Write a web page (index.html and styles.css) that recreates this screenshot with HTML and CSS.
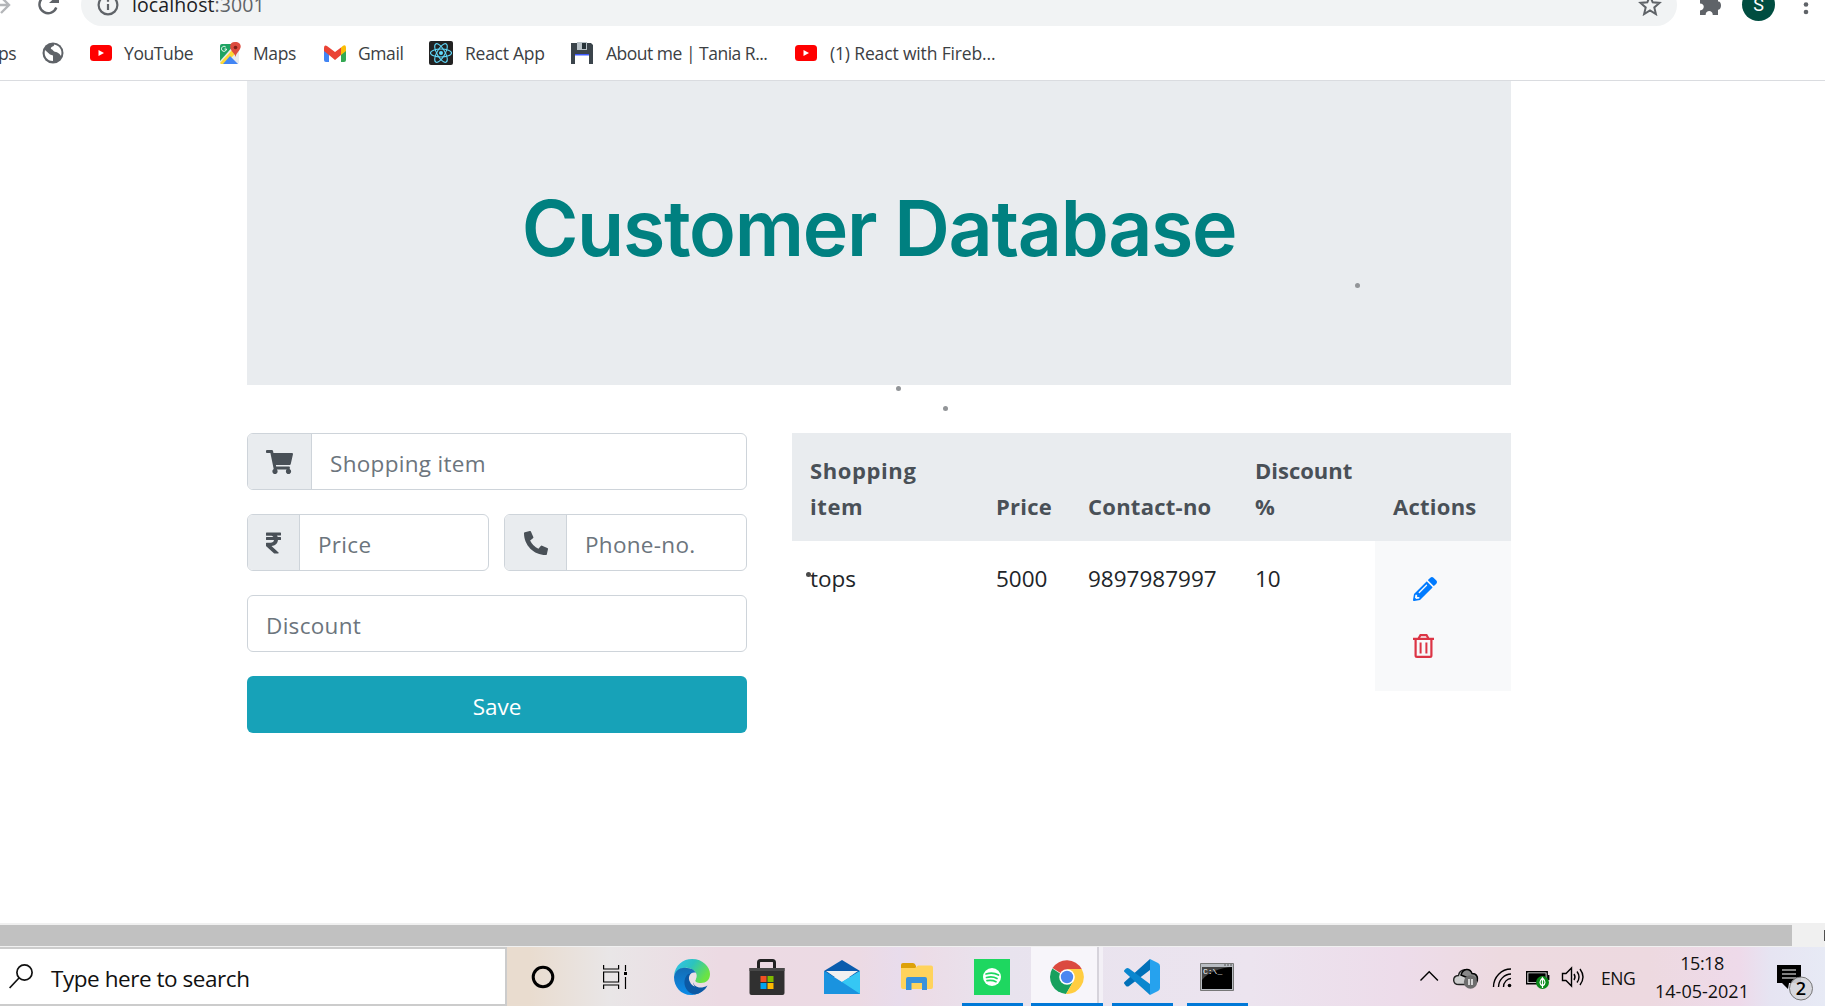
FILE: index.html
```html
<!DOCTYPE html>
<html lang="en">
<head>
<meta charset="utf-8">
<title>Customer Database</title>
<link rel="stylesheet" href="styles.css">
</head>
<body>
<header class="browser">
  <div class="toolbar">
    <svg class="nav" width="81" height="26" viewBox="0 0 81 26" fill="none" stroke-width="2.4">
      <path d="M-4 5H8M1-3l8 8-8 8" stroke="#b4b6b9"/>
      <path d="M56.3 7.5A8.7 8.7 0 1 1 54-2" stroke="#5f6368"/>
      <path d="M49 3h10v-9z" fill="#5f6368"/>
    </svg>
    <div class="omnibox">
      <svg width="22" height="22" viewBox="0 0 22 22" fill="none" stroke="#5f6368" stroke-width="2.2"><circle cx="11" cy="11" r="9.4"/><path d="M11 10v6M11 5.5v2.3"/></svg>
      <span class="url">localhost<span>:3001</span></span>
      <svg class="star" width="24" height="22" viewBox="0 0 24 22" fill="none" stroke="#5f6368" stroke-width="2"><path d="M12 2l2.700 6.300 6.800.6-5.200 4.500 1.600 6.700-5.900-3.600-5.900 3.600 1.600-6.700-5.200-4.500 6.800-.6z"/></svg>
    </div>
    <svg width="148" height="26" viewBox="1677 0 148 26">
      <path d="M1700-4h18v5.500c4-.8 4 9 0 8.200V15h-5.300c.5-5.500-7.500-5.500-7 0H1700V10.500c5-.5 5-7 0-7z" fill="#5f6368"/>
      <circle cx="1758.500" cy="4.500" r="16.500" fill="#004d40"/>
      <text x="1758.500" y="10.500" class="avatar">S</text>
      <g fill="#5f6368"><circle cx="1806" cy="-3" r="2.300"/><circle cx="1806" cy="4.500" r="2.300"/><circle cx="1806" cy="12" r="2.300"/></g>
    </svg>
  </div>
  <nav class="bookmarks">
    <a class="apps">ps</a>
    <a><svg width="22" height="22" viewBox="0 0 22 22"><circle cx="11" cy="11" r="10.500" fill="#5f6368"/><path d="M3 8l5 4.500 3 1v5.500C5 19 1.500 14 3 8zM12 2.500c1 2-4 2-3 4.500 2 0 2 3 5 3 1 0 3 1 5 4C21 8 17 3 12 2.500z" fill="#fff"/></svg></a>
    <a><svg width="22" height="16" viewBox="0 0 22 16"><rect width="22" height="16" rx="3.500" fill="#f00"/><path d="M8.500 5v6l5.500-3z" fill="#fff"/></svg><span>YouTube</span></a>
    <a><svg class="maps" width="22" height="23" viewBox="0 0 22 23"><rect x="1" y="2" width="19" height="20" rx="2" fill="#e8eaed"/><path d="M1 4q0-2 2-2h13L1 19z" fill="#1ea362"/><path d="M1 21L14 7l3 4L6 22H2z" fill="#fdd835"/><path d="M4 22l7-8 8 8z" fill="#4285f4"/><path d="M16 0c7 0 7 6 3 10-1.500 1.500-2 3-2.500 5-.5-2-1.500-3.500-3-5C10 6 10 0 16 0z" fill="#dd4b3e"/><circle cx="16.500" cy="5.500" r="1.800" fill="#7d2019"/><path d="M7.500 7h-2M7.500 7a2.500 2.500 0 1 1-.8-2" stroke="#fff" fill="none"/></svg><span>Maps</span></a>
    <a><svg width="22" height="17" viewBox="0 0 22 17"><path d="M0 3v12q0 2 2 2h3V7z" fill="#4285f4"/><path d="M22 3v12q0 2-2 2h-3V7z" fill="#34a853"/><path d="M17 2.500q5-5 5 1V6l-5 4z" fill="#fbbc04"/><path d="M0 3.500Q0-2 5 2.500l6 4.500 6-4.500V10l-6 5-6-5-5-4z" fill="#ea4335"/></svg><span>Gmail</span></a>
    <a><svg width="24" height="24" viewBox="0 0 24 24"><rect width="24" height="24" rx="2" fill="#222"/><g fill="none" stroke="#61dafb" stroke-width="1.100"><ellipse cx="12" cy="12" rx="10.500" ry="4"/><ellipse cx="12" cy="12" rx="10.500" ry="4" transform="rotate(60 12 12)"/><ellipse cx="12" cy="12" rx="10.500" ry="4" transform="rotate(120 12 12)"/></g><circle cx="12" cy="12" r="2" fill="#61dafb"/></svg><span class="react">React App</span></a>
    <a><svg width="22" height="23" viewBox="0 0 22 23"><path d="M0 1h20l2 2v19H0z" fill="#3b444b"/><path d="M6 0h10v8H6z" fill="#b9c2c8"/><path d="M11 1h4v6h-4z" fill="#263238"/><path d="M4 12h14v10H4z" fill="#fff"/><path d="M4 12h14v1.500H4z" fill="#3d5afe"/></svg><span class="about">About me | Tania R...</span></a>
    <a><svg width="22" height="16" viewBox="0 0 22 16"><rect width="22" height="16" rx="3.500" fill="#f00"/><path d="M8.500 5v6l5.500-3z" fill="#fff"/></svg><span class="long">(1) React with Fireb...</span></a>
  </nav>
</header>

<main class="page">
  <section class="jumbotron"><h1>Customer Database</h1></section>
  <div class="columns">
    <form class="entry">
      <div class="group">
        <span class="addon cart"><svg width="27" height="24" viewBox="0 0 576 512" fill="currentColor"><path d="M528.120 301.319l47.273-208C578.806 78.301 567.391 64 551.990 64H159.208l-9.166-44.810C147.758 8.021 137.930 0 126.529 0H24C10.745 0 0 10.745 0 24v16c0 13.255 10.745 24 24 24h69.883l70.248 343.435C147.325 417.100 136 435.222 136 456c0 30.928 25.072 56 56 56s56-25.072 56-56c0-15.674-6.447-29.835-16.824-40h209.647C430.447 426.165 424 440.326 424 456c0 30.928 25.072 56 56 56s56-25.072 56-56c0-22.172-12.888-41.332-31.579-50.405l5.517-24.276c3.413-15.018-8.002-29.319-23.403-29.319H218.117l-6.545-32h293.145c11.206 0 20.920-7.754 23.403-18.681z"/></svg></span>
        <input placeholder="Shopping item">
      </div>
      <div class="pair">
        <div class="group">
          <span class="addon rupee"><svg width="15" height="24" viewBox="0 0 320 512" fill="currentColor"><path d="M308 96c6.627 0 12-5.373 12-12V44c0-6.627-5.373-12-12-12H12C5.373 32 0 37.373 0 44v44.748c0 6.627 5.373 12 12 12h85.280c27.308 0 48.261 9.958 60.970 27.252H12c-6.627 0-12 5.373-12 12v40c0 6.627 5.373 12 12 12h158.757c-6.217 36.086-32.961 58.632-74.757 58.632H12c-6.627 0-12 5.373-12 12v53.012c0 3.349 1.400 6.546 3.861 8.818l165.052 152.356a12.001 12.001 0 0 0 8.139 3.182h82.562c10.924 0 16.166-13.408 8.139-20.818L116.871 319.906c76.499-2.340 131.144-53.395 138.318-127.906H308c6.627 0 12-5.373 12-12v-40c0-6.627-5.373-12-12-12h-58.690c-3.486-11.541-8.280-22.246-14.252-32H308z"/></svg></span>
          <input placeholder="Price">
        </div>
        <div class="group">
          <span class="addon phone"><svg width="24" height="24" viewBox="0 0 512 512" fill="currentColor"><path d="M497.390 361.800l-112-48a24 24 0 0 0-28 6.900l-49.600 60.600A370.660 370.660 0 0 1 130.600 204.110l60.600-49.600a23.940 23.940 0 0 0 6.900-28l-48-112A24.160 24.160 0 0 0 122.600.61l-104 24A24 24 0 0 0 0 48c0 256.500 207.900 464 464 464a24 24 0 0 0 23.400-18.600l24-104a24.290 24.290 0 0 0-14.010-27.600z"/></svg></span>
          <input placeholder="Phone-no.">
        </div>
      </div>
      <div class="group"><input placeholder="Discount"></div>
      <button type="button" class="save">Save</button>
    </form>
    <table class="customers">
      <colgroup><col class="c-item"><col class="c-price"><col class="c-contact"><col class="c-discount"><col class="c-actions"></colgroup>
      <thead><tr><th>Shopping item</th><th>Price</th><th>Contact-no</th><th>Discount %</th><th>Actions</th></tr></thead>
      <tbody><tr><td>tops</td><td>5000</td><td>9897987997</td><td>10</td>
        <td class="actions">
          <svg width="24" height="24" viewBox="0 0 512 512" fill="#007bff"><path d="M497.900 142.100l-46.100 46.100c-4.700 4.700-12.300 4.700-17 0l-111-111c-4.700-4.700-4.700-12.300 0-17l46.100-46.100c18.700-18.700 49.100-18.700 67.900 0l60.100 60.100c18.800 18.700 18.800 49.100 0 67.900zM284.200 99.800L21.600 362.400.4 483.900c-2.900 16.400 11.400 30.600 27.800 27.800l121.500-21.300 262.600-262.600c4.700-4.700 4.700-12.300 0-17l-111-111c-4.800-4.700-12.400-4.700-17.100 0zM124.100 339.900c-5.500-5.500-5.500-14.300 0-19.800l154-154c5.500-5.500 14.300-5.500 19.800 0s5.500 14.300 0 19.800l-154 154c-5.500 5.500-14.300 5.500-19.800 0zM88 424h48v36.300l-64.500 11.300-31.100-31.100L51.700 376H88v48z"/></svg>
          <svg width="21" height="24" viewBox="0 0 21 24" fill="none" stroke="#dc3545"><path d="M0 4.800h21M2.600 5v16.500q0 1.400 1.400 1.400h13q1.400 0 1.400-1.400V5M5.500 4.500l2-3.300h6l2 3.300" stroke-width="2.200"/><path d="M7.600 8.500v11M13.400 8.500v11" stroke-width="2"/></svg>
        </td></tr></tbody>
    </table>
  </div>
</main>

<div class="scrollbar"><div class="thumb"></div><div class="arrow"></div></div>

<footer class="taskbar">
  <div class="search">
    <svg width="24" height="25" viewBox="0 0 24 25" fill="none" stroke="#111" stroke-width="1.700"><circle cx="15.500" cy="8.500" r="7.600"/><path d="M10 14L.6 24"/></svg>
    <span>Type here to search</span>
  </div>
  <div class="tasks">
    <div class="task"><svg width="24" height="24" viewBox="0 0 24 24"><circle cx="12" cy="12" r="9.800" fill="none" stroke="#000" stroke-width="3"/></svg></div>
    <div class="task view"><svg width="24" height="24" viewBox="0 0 24 24" fill="none" stroke="#000" stroke-width="1.200"><path d="M.6 0v4h15V0M.6 7h15v10H.6zM.6 24v-4h15v4M22.500 0v6M22.500 12v12"/><path d="M21 7h3v3h-3z" fill="#000" stroke="none"/></svg></div>
    <div class="task"><svg width="36" height="36" viewBox="0 0 36 36">
      <defs><linearGradient id="eg" x1="0" x2="1" y1="0" y2=".5"><stop stop-color="#35c1f1"/><stop offset=".5" stop-color="#2cc3be"/><stop offset="1" stop-color="#6be343"/></linearGradient><linearGradient id="eb" x1="0" x2="0" y1="0" y2="1"><stop stop-color="#146cb4"/><stop offset="1" stop-color="#0c8ce8"/></linearGradient></defs>
      <path d="M0 17C1 6 9 0 18 0c11 0 18 8 18 15 0 6-4 9-9 9-4 0-7-1-5-4 2-5-1-10-8-11C7 8 2 12 0 17z" fill="url(#eg)"/>
      <path d="M0 18C1 11 7 8 13 9c6 0 9 4 9 6-6-2-9 5-6 11 3 5 10 5 15 3-4 5-9 7-14 7C7 36 0 28 0 18z" fill="url(#eb)"/>
      <path d="M14 15c-7 7-3 19 7 20.500 5-1 10-4 12.500-9-7 4-14 2-15-5-.3-2 .5-4 2-5.500-2-1.500-4.500-2-6.500-1z" fill="#0c59a4"/><path d="M22 14c-5-2-9 4-6 9 1 2.500 3 4 5 4.500-2-2-2-4-1.500-5.500 1 2 4 2 4 2-3-1-3-2-1.800-4 .8-2 .8-4 .3-6z" fill="#ece0e7"/></svg></div>
    <div class="task"><svg width="36" height="36" viewBox="0 0 36 36"><path d="M9.500 11V3.500Q9.500 1.500 11.500 1.500h12q2 0 2 2V11" fill="none" stroke="#222" stroke-width="3"/><path d="M.5 9h35v25q0 2-2 2h-31q-2 0-2-2z" fill="#303030"/><path d="M.5 9h35v3H.5z" fill="#484848"/><path d="M11.500 17h6v6h-6z" fill="#f25022"/><path d="M18.500 17h6v6h-6z" fill="#7fba00"/><path d="M11.500 24h6v6h-6z" fill="#00a4ef"/><path d="M18.500 24h6v6h-6z" fill="#ffb900"/></svg></div>
    <div class="task"><svg width="36" height="34" viewBox="0 0 36 34"><path d="M0 11L18 0l18 11v6H0z" fill="#0a5cad"/><path d="M2 11h32L18 22z" fill="#f1f1f1"/><path d="M0 11l18 11 18-11v23H0z" fill="#1f9de4"/><path d="M18 22l18-11v23z" fill="#35c7f4"/><path d="M0 11l36 23H0z" fill="#1a93df"/></svg></div>
    <div class="task"><svg width="32" height="28" viewBox="0 0 32 28"><path d="M0 2q0-2 2-2h10q2 0 3 3v4H0z" fill="#dda109"/><path d="M0 5h14l3-2.500h13q2 0 2 2V24q0 2-2 2H2q-2 0-2-2z" fill="#ffd35c"/><path d="M5 27V16q0-2 2-2h17q2 0 2 2v11h-5v-7H10.500v7z" fill="#3a92db"/></svg></div>
    <div class="task running"><svg width="36" height="36" viewBox="0 0 36 36"><path d="M0 0h36v36H0z" fill="#1ed760"/><circle cx="18" cy="18" r="9" fill="#fff"/><path d="M12 15q7-2 12.500 1M12.500 18.500q6-1.500 10.500 1M13 21.700q5-1 9 1" fill="none" stroke="#1ed760" stroke-width="1.700" stroke-linecap="round"/></svg></div>
    <div class="task running active"><svg width="34" height="34" viewBox="0 0 34 34"><path d="M17 17L2.500 8A17 17 0 0 1 31.700 9z" fill="#db4a3f"/><path d="M2.300 8.500A17 17 0 0 0 16 34l7-12z" fill="#17a05e"/><path d="M17 9h14.700A17 17 0 0 1 16 34l7.500-13z" fill="#ffcd41"/><circle cx="17" cy="17" r="7.800" fill="#fff"/><circle cx="17" cy="17" r="6.200" fill="#4b87f1"/></svg></div>
    <div class="task running"><svg width="36" height="36" viewBox="0 0 36 36"><path d="M26 0v11L5 27q-1.500 1-3 0l-1.500-2q-1-1 0-2z" fill="#0070b8"/><path d="M.5 13q-1-1 0-2L2 9.500q1.500-1 3 0L26 25v11z" fill="#0a87cf"/><path d="M26 0l8 4q2 1 2 3v22q0 2-2 3l-8 4z" fill="#26a2ee"/></svg></div>
    <div class="task running"><svg width="34" height="28" viewBox="0 0 34 28"><path d="M.5.5h33v27H.5z" fill="#b8bcc2" stroke="#777"/><path d="M2 4h30v22H2z" fill="#000"/><path d="M2 4h30C20 5 8 9 2 17z" fill="#444"/><path d="M24 2h8" stroke="#555" stroke-dasharray="2 1"/><text x="3" y="11" class="prompt">C:\_</text></svg></div>
  </div>
  <svg class="tray" width="184" height="59" viewBox="1412 947 184 59" fill="none" stroke="#000" stroke-width="1.400">
    <path d="M1420.500 980.500l8.700-8.700 8.700 8.700"/>
    <path d="M1459 984.500c-7 0-7-8.500-.5-9 1-7 11-8 13.500-1.500 6 0 8 9 1 10.500z" fill="#ccc" stroke="#222"/><path d="M1461 975c2-7 9-7 11-1.500 5 0 7 5 4 8z" fill="#888"/><circle cx="1470.500" cy="982" r="6.700" fill="#6d6d6d" stroke="none"/><path d="M1469 979v6M1472 979v6" stroke="#fff"/>
    <path d="M1493.500 987c0-10 8-18 17.500-18M1498.500 987c0-7 6-13 12.500-13M1503.500 987c0-5 4-8.500 7.500-8.500"/><circle cx="1509.500" cy="985.500" r="1.800" fill="#000" stroke="none"/>
    <path d="M1526.700 971.700h20.500v12h-20.500z" fill="#fff"/><path d="M1529 974h16v7.500h-16z" fill="#000"/><path d="M1548.700 975v5"/><circle cx="1542.500" cy="982.500" r="6.500" fill="#0b8a1a" stroke="none"/><path d="M1542.500 978q-5 5 0 8 5-3 0-8v10" stroke="#fff" stroke-width="1.200"/>
    <path d="M1562.500 973.500h3.500l5.500-5.500v18l-5.500-5.500h-3.500zM1574 974q2 3 0 6M1577 971.500q4 5.500 0 11M1580 969q6 8 0 16"/>
  </svg>
  <span class="lang">ENG</span>
  <div class="clock"><span>15:18</span><span class="date">14-05-2021</span></div>
  <svg class="notify" width="60" height="59" viewBox="1765 947 60 59"><path d="M1777 965h24v18h-12l-1 6-6-6h-5z" fill="#000"/><path d="M1782 970h14M1782 974h14M1782 978h14" stroke="#fff" stroke-width="1.200"/><circle cx="1801" cy="988.500" r="11.500" fill="#d5d6dc" fill-opacity=".93" stroke="#777"/><text x="1801" y="995" class="count">2</text></svg>
</footer>

<i class="speck s1"></i><i class="speck s2"></i><i class="speck s3"></i><i class="speck s4"></i>
</body>
</html>
```
FILE: styles.css
```css
* { box-sizing: border-box; }
body {
  margin: 0;
  width: 1825px;
  height: 1006px;
  overflow: hidden;
  position: relative;
  display: flex;
  flex-direction: column;
  background: #fff;
  color: #212529;
  font: 22.500px/36px "Open Sans", "Noto Sans", sans-serif;
}
svg { display: block; flex: none; }

/* browser chrome */
.browser { height: 81px; border-bottom: 1px solid #dadce0; }
.toolbar { display: flex; height: 26px; overflow: hidden; }
.omnibox {
  flex: 1;
  height: 42px;
  margin-top: -16px;
  padding: 0 15px 0 16px;
  border-radius: 21px;
  background: #f1f3f4;
  display: flex;
  align-items: center;
  gap: 13px;
}
.url { font-size: 19.500px; line-height: 24px; color: #202124; letter-spacing: .1px; }
.url span { color: #5f6368; }
.star { margin-left: auto; }
.avatar { font: 18px Roboto, sans-serif; fill: #fff; text-anchor: middle; }
.bookmarks {
  display: grid;
  grid-template-columns: 42px 48px 130px 104px 105px 142px 224px 1fr;
  height: 54px;
  font-size: 17.500px;
  line-height: 24px;
  color: #3c4043;
}
.bookmarks a { display: flex; align-items: center; gap: 12px; white-space: nowrap; letter-spacing: -.4px; }
.bookmarks .maps { margin-left: -1px; }
.bookmarks .apps { margin-left: -2px; }
.bookmarks .react { letter-spacing: -.25px; }
.bookmarks .about { letter-spacing: -.5px; margin-left: 1px; }
.bookmarks .long { letter-spacing: -.15px; margin-left: 1px; }

/* page */
.page { width: 1264px; margin-left: 247px; flex: 1; }
.jumbotron { height: 304px; background: #e9ecef; display: flex; justify-content: center; }
h1 {
  margin: 95px 0 0;
  font: 600 77px/104px Inter, sans-serif;
  letter-spacing: -1.300px;
  color: #008080;
  white-space: nowrap;
}
.columns { display: grid; grid-template-columns: 500px 719px; gap: 45px; margin-top: 48px; align-items: start; }
.entry { display: grid; gap: 24px; }
.pair { display: grid; grid-template-columns: 242px 243px; gap: 15px; }
.group {
  height: 57px;
  display: flex;
  border: 1px solid #ced4da;
  border-radius: 6px;
  overflow: hidden;
}
.addon {
  display: flex;
  align-items: center;
  padding: 0 0 0 18px;
  background: #e9ecef;
  border-right: 1px solid #ced4da;
  color: #495057;
}
.addon.cart { width: 64px; }
.addon.rupee { width: 52px; }
.addon.phone { width: 62px; padding-left: 19px; }
input {
  flex: 1;
  min-width: 0;
  border: 0;
  padding: 5px 18px 0;
  font: inherit;
  letter-spacing: .3px;
  background: none;
}
input::placeholder { color: #6c757d; opacity: 1; }
.save {
  height: 57px;
  padding: 5px 0 0;
  border: 0;
  border-radius: 6px;
  background: #17a2b8;
  color: #fff;
  font: inherit;
}
.customers { width: 719px; table-layout: fixed; border-collapse: collapse; }
.c-item { width: 186px; } .c-price { width: 92px; } .c-contact { width: 167px; }
.c-discount { width: 138px; } .c-actions { width: 136px; }
th { height: 108px; padding: 19px 18px 17px; text-align: left; vertical-align: bottom; background: #e9ecef; color: #495057; font-size: 22px; letter-spacing: .25px; }
th:first-child { letter-spacing: .6px; }
th:nth-child(4) { letter-spacing: 0; }
td { height: 150px; padding: 20px 18px; vertical-align: top; }
.actions { background: #f8f9fa; padding: 36px 38px 30px; }
.actions svg + svg { margin-top: 33px; }

/* horizontal scrollbar */
.scrollbar { height: 24px; background: #f0f0f0; padding: 2px 0 1px; display: flex; justify-content: space-between; align-items: center; }
.thumb { width: 1792px; height: 21px; background: #c1c1c1; }
.arrow { width: 1px; height: 11px; background: #505050; }

/* taskbar */
.taskbar {
  height: 59px;
  display: flex;
  color: #111;
  background: linear-gradient(90deg, #e9dccf 530px, #e9e6e7 610px, #ecdae3 720px, #ecdae4 860px, #e8dcec 900px, #ecdce7 925px, #e8e3ee 1000px, #ece4ef 1250px, #eddcea 1400px, #eddae0 1500px, #edd9e0 1650px, #eedaea 1740px, #e6e4f2 1770px, #e7eaf5 1825px);
}
.search { width: 507px; background: #fff; border: 2px solid #ccc; border-left: 0; display: flex; align-items: center; gap: 18px; padding-left: 9px; }
.search span { padding-top: 5px; letter-spacing: -.45px; }
.tasks { display: grid; grid-template-columns: 72px 75px repeat(8, 75px); }
.task { display: grid; place-items: center; border-bottom: 0 solid #0078d7; padding-top: 1px; }
.view { padding-right: 4px; }
.running { border-bottom-width: 3px; padding-top: 4px; margin: 0 6px 0 8px; padding-right: 2px; }
.active { margin: 0 1px 0 2px; padding-right: 1px; background: linear-gradient(90deg, #f7f5fa 66px, #d6d3db 66px 68px, #f3f0f6 68px); }
.prompt { font: 8px "Liberation Mono", monospace; fill: #fff; }
.tray { margin-left: auto; }
.lang { width: 52px; padding: 14px 0 0 5px; font-size: 17.500px; line-height: 34px; letter-spacing: -.5px; }
.clock { width: 117px; padding: 2px 9px 0 0; text-align: center; font-size: 18px; line-height: 28px; letter-spacing: -.5px; }
.clock span { display: block; }
.clock .date { letter-spacing: 0; }
.count { font: 600 18px "Open Sans", sans-serif; text-anchor: middle; fill: #000; }

/* stray specks over the page */
.speck { position: absolute; width: 5px; height: 5px; border-radius: 50%; background: #929598; }
.s1 { left: 1355px; top: 283px; } .s2 { left: 896px; top: 386px; }
.s3 { left: 943px; top: 406px; } .s4 { left: 806px; top: 572px; background: #4a4a4a; }
```
